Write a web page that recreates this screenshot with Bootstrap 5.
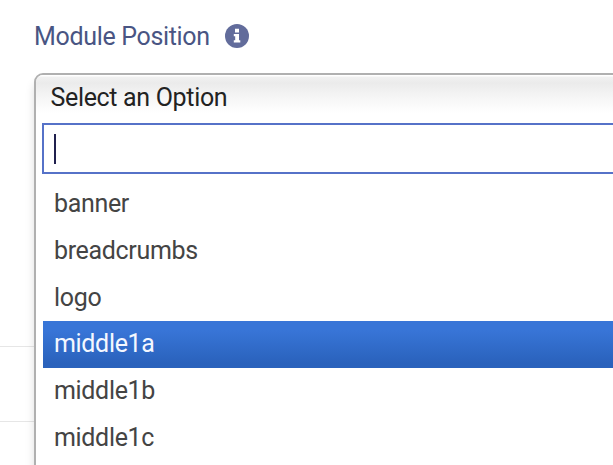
<!DOCTYPE html>
<html lang="en">
<head>
<meta charset="utf-8">
<title>Module Position</title>
<link href="https://cdn.jsdelivr.net/npm/bootstrap@5.3.0/dist/css/bootstrap.min.css" rel="stylesheet">
<style>
body{height:465px;font-family:Roboto,sans-serif;font-size:25px;letter-spacing:-.33px;line-height:46px;color:#444;background:#fff}
.field-label{height:73px;padding:13px 0 0 34px;color:#495583}
.field-label label{padding-top:1px}
.field-label svg{width:24px;height:24px;margin:11px 0 0 15.5px}
.field-label label,.picker-title span,.option span{white-space:nowrap}
.field-body{height:392px}
.gutter{width:34px;padding-top:273px}
.gutter div{height:75px;border-top:1px solid #e6e6e6}
.picker{width:640px;height:450px;border:2px solid #b0b0b0;border-radius:9px;box-shadow:0 8px 10px rgba(0,0,0,.13)}
.picker-title{height:48px;padding-left:14.5px;color:#222;border-radius:7px 7px 0 0;background:linear-gradient(#fff 1px,#f1f1f1 2px,#ebebeb 8px,#f4f4f4 20px,#fff 38px)}
.search-box{height:51px;margin-left:6px;padding:9px 0 0 10px;border:2px solid #5672c8}
.caret{width:2px;height:30px;background:#20204e}
.options{padding:7px 0 0 7px}
.option{height:46.8px;padding-left:11px}
.option.active{color:#f4f7ff;background:linear-gradient(#3875d7 20%,#2a62bc 90%)}
</style>
<script src="https://cdn.jsdelivr.net/npm/bootstrap@5.3.0/dist/js/bootstrap.bundle.min.js"></script>
</head>
<body class="overflow-hidden m-0">
<div class="field-label d-flex align-items-start">
  <label for="position">Module Position</label>
  <svg viewBox="0 0 24 24" aria-hidden="true"><circle cx="12" cy="12" r="12" fill="#626c9b"/><path fill="#fff" d="M10 4.8h4v3.6h-4zM8.8 10h5.2v6.3h1.3v2.2H8.8v-2.2h1.4v-4.1H8.8z"/></svg>
</div>
<div class="field-body d-flex overflow-hidden">
  <div class="gutter flex-shrink-0"><div></div><div></div></div>
  <div class="picker bg-white flex-shrink-0" id="position">
    <div class="picker-title"><span>Select an Option</span></div>
    <div class="search-box bg-white"><div class="caret"></div></div>
    <div class="options">
      <div class="option"><span>banner</span></div>
      <div class="option"><span>breadcrumbs</span></div>
      <div class="option"><span>logo</span></div>
      <div class="option active"><span>middle1a</span></div>
      <div class="option"><span>middle1b</span></div>
      <div class="option"><span>middle1c</span></div>
    </div>
  </div>
</div>
</body>
</html>
